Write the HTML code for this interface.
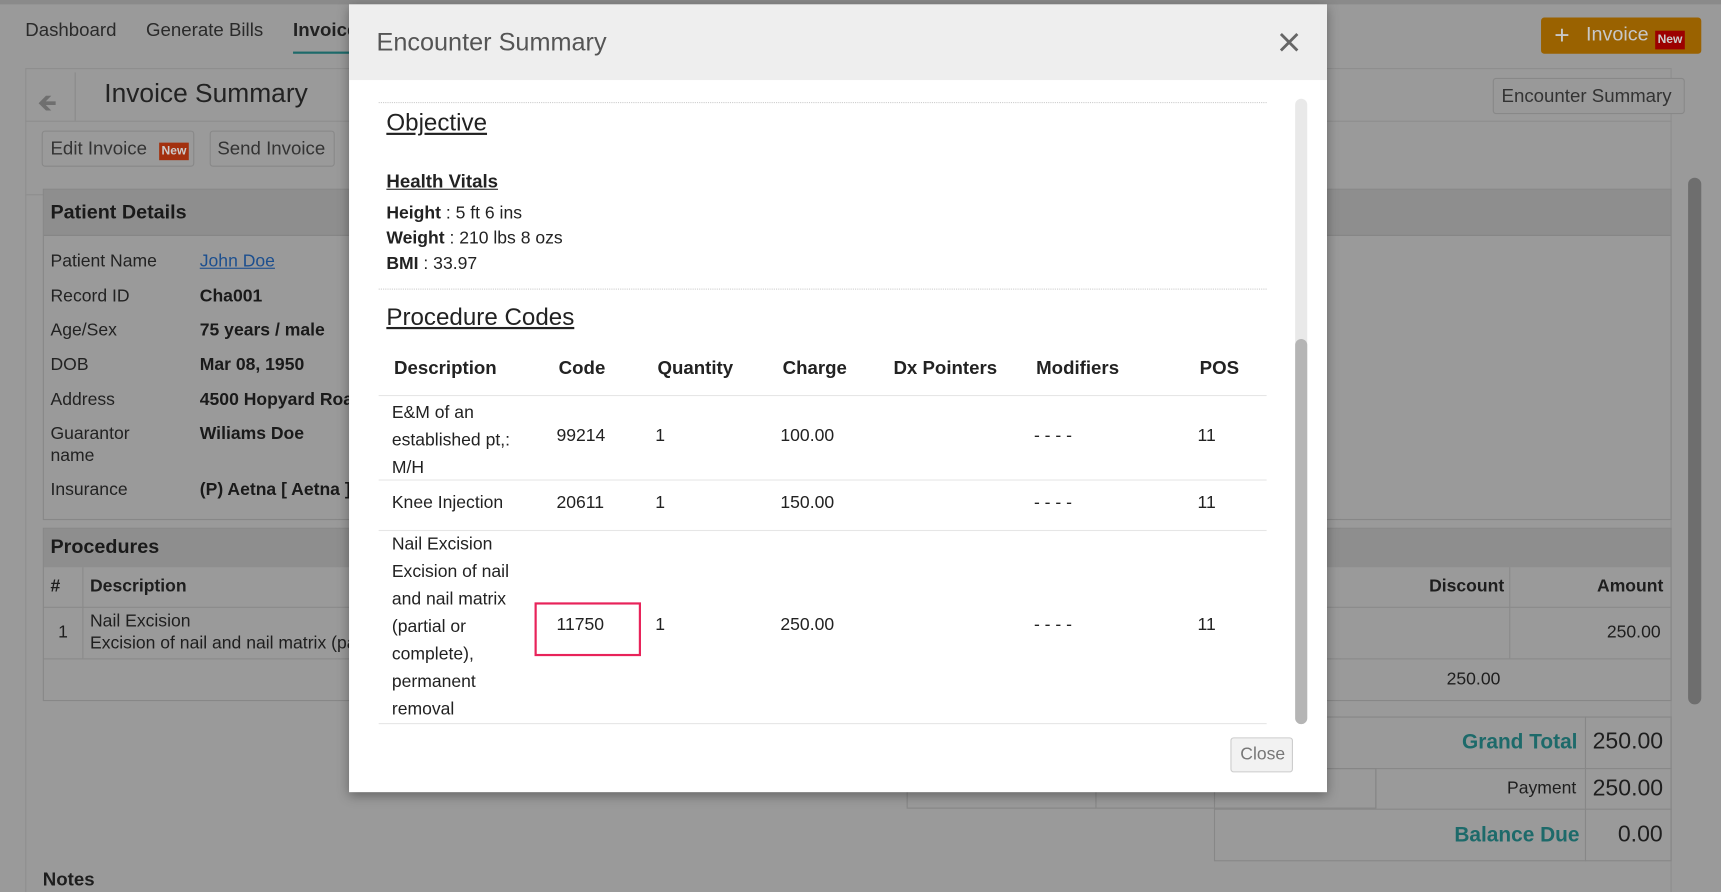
<!DOCTYPE html>
<html><head><meta charset="utf-8"><style>
*{box-sizing:border-box;margin:0;padding:0}
html,body{width:1721px;height:892px;overflow:hidden;background:#999}
#w{position:absolute;left:0;top:0;width:1568px;height:813px;transform:scale(1.0976,1.0972);transform-origin:0 0;background:#9a9a9a;font-family:"Liberation Sans",sans-serif;color:#1e1e1e;overflow:hidden}
.a{position:absolute;white-space:nowrap}
.b{position:absolute;border:1px solid #878787}
.lbl{font-size:16px;color:#222}
.val{font-size:16px;font-weight:bold;color:#1a1a1a}
#m{position:absolute;left:318px;top:4px;width:891px;height:718px;background:#fff;box-shadow:0 3px 10px rgba(0,0,0,.35)}
#m .a{color:#222}
.th{font-size:17px;font-weight:bold}
.td{font-size:16px}
.dl{position:absolute;left:27px;width:809px;border-top:1px dotted #ccc}
.sl{position:absolute;left:27px;width:809px;border-top:1px solid #e6e6e6}
</style></head><body><div id="w">
<div class="a" style="left:0;top:0;width:1568px;height:4px;background:#8a8a8a"></div>
<div class="a" style="left:23px;top:18px;font-size:17px;color:#2a2a2a">Dashboard</div>
<div class="a" style="left:133px;top:18px;font-size:17px;color:#2a2a2a">Generate Bills</div>
<div class="a" style="left:267px;top:18px;font-size:17px;font-weight:bold;color:#222">Invoices</div>
<div class="a" style="left:267px;top:47px;width:60px;height:2px;background:#1d6a6a"></div>
<div class="a" style="left:1404px;top:16px;width:146px;height:33px;background:#9a6200;border-radius:3px"></div>
<div class="a" style="left:1416px;top:19px;font-size:24px;color:#c8c8c8">+</div>
<div class="a" style="left:1445px;top:21px;font-size:18px;color:#c8c8c8">Invoice</div>
<div class="a" style="left:1508px;top:28px;width:27px;height:17px;background:#9c0000;color:#ccc;font-size:11px;font-weight:bold;text-align:center;line-height:17px">New</div>
<div class="b" style="left:23px;top:62px;width:1500px;height:760px;border-color:#8e8e8e"></div>
<div class="a" style="left:23px;top:110px;width:1500px;height:1px;background:#8e8e8e"></div>
<div class="a" style="left:68px;top:66px;width:1px;height:44px;background:#8a8a8a"></div>
<div class="a" style="left:34px;top:77px;font-size:22px;color:#6f6f6f">&#129144;</div>
<div class="a" style="left:95px;top:72px;font-size:24px;color:#222">Invoice Summary</div>
<div class="a" style="left:1360px;top:71px;width:175px;height:33px;border:1px solid #888;border-radius:3px;background:#999"></div>
<div class="a" style="left:1368px;top:78px;font-size:17px;color:#333">Encounter Summary</div>
<div class="a" style="left:38px;top:119px;width:139px;height:33px;border:1px solid #888;border-radius:3px"></div>
<div class="a" style="left:46px;top:126px;font-size:17px;color:#333">Edit Invoice</div>
<div class="a" style="left:145px;top:130px;width:27px;height:16px;background:#a3300e;color:#ccc;font-size:11px;font-weight:bold;text-align:center;line-height:16px">New</div>
<div class="a" style="left:191px;top:119px;width:114px;height:33px;border:1px solid #888;border-radius:3px"></div>
<div class="a" style="left:198px;top:126px;font-size:17px;color:#333">Send Invoice</div>
<div class="a" style="left:23px;top:177px;width:1500px;height:1px;background:#8e8e8e"></div>
<div class="b" style="left:39px;top:172px;width:1484px;height:302px"></div>
<div class="a" style="left:40px;top:173px;width:1482px;height:42px;background:#8e8e8e;border-bottom:1px solid #858585"></div>
<div class="a" style="left:46px;top:183px;font-size:18px;font-weight:bold;color:#1a1a1a">Patient Details</div>
<div class="a lbl" style="left:46px;top:230px">Patient Name</div><div class="a" style="left:182px;top:230px;font-size:16px;color:#1c4f8f;text-decoration:underline">John Doe</div>
<div class="a lbl" style="left:46px;top:262px">Record ID</div><div class="a val" style="left:182px;top:262px">Cha001</div>
<div class="a lbl" style="left:46px;top:293px">Age/Sex</div><div class="a val" style="left:182px;top:293px">75 years / male</div>
<div class="a lbl" style="left:46px;top:324px">DOB</div><div class="a val" style="left:182px;top:324px">Mar 08, 1950</div>
<div class="a lbl" style="left:46px;top:356px">Address</div><div class="a val" style="left:182px;top:356px">4500 Hopyard Road</div>
<div class="a lbl" style="left:46px;top:387px">Guarantor</div><div class="a lbl" style="left:46px;top:407px">name</div><div class="a val" style="left:182px;top:387px">Wiliams Doe</div>
<div class="a lbl" style="left:46px;top:438px">Insurance</div><div class="a val" style="left:182px;top:438px">(P) Aetna [ Aetna ]</div>
<div class="b" style="left:39px;top:481px;width:1484px;height:158px"></div>
<div class="a" style="left:40px;top:482px;width:1482px;height:35px;background:#8e8e8e"></div>
<div class="a" style="left:46px;top:488px;font-size:18px;font-weight:bold;color:#1a1a1a">Procedures</div>
<div class="a" style="left:40px;top:553px;width:1482px;height:1px;background:#8a8a8a"></div>
<div class="a" style="left:40px;top:600px;width:1482px;height:1px;background:#8a8a8a"></div>
<div class="a" style="left:75px;top:517px;width:1px;height:83px;background:#8a8a8a"></div>
<div class="a" style="left:1375px;top:517px;width:1px;height:83px;background:#8a8a8a"></div>
<div class="a" style="left:46px;top:526px;font-size:16px;font-weight:bold">#</div>
<div class="a" style="left:82px;top:526px;font-size:16px;font-weight:bold">Description</div>
<div class="a" style="left:1302px;top:526px;font-size:16px;font-weight:bold">Discount</div>
<div class="a" style="left:1455px;top:526px;font-size:16px;font-weight:bold">Amount</div>
<div class="a" style="left:53px;top:568px;font-size:16px">1</div>
<div class="a" style="left:82px;top:558px;font-size:16px">Nail Excision</div>
<div class="a" style="left:82px;top:578px;font-size:16px">Excision of nail and nail matrix (partial or complete)</div>
<div class="a" style="left:1464px;top:568px;font-size:16px">250.00</div>
<div class="a" style="left:1318px;top:611px;font-size:16px">250.00</div>
<div class="b" style="left:1106px;top:653px;width:417px;height:132px"></div>
<div class="a" style="left:1106px;top:700px;width:417px;height:1px;background:#878787"></div>
<div class="a" style="left:1106px;top:737px;width:417px;height:1px;background:#878787"></div>
<div class="a" style="left:1444px;top:653px;width:1px;height:132px;background:#878787"></div>
<div class="a" style="left:1253px;top:700px;width:1px;height:37px;background:#878787"></div>
<div class="b" style="left:826px;top:700px;width:428px;height:37px"></div>
<div class="a" style="left:998px;top:700px;width:1px;height:37px;background:#878787"></div>
<div class="a" style="left:1332px;top:666px;font-size:19px;font-weight:bold;color:#1d6a6a">Grand Total</div>
<div class="a" style="left:1451px;top:664px;font-size:21px">250.00</div>
<div class="a" style="left:1373px;top:710px;font-size:16px">Payment</div>
<div class="a" style="left:1451px;top:707px;font-size:21px">250.00</div>
<div class="a" style="left:1325px;top:751px;font-size:19px;font-weight:bold;color:#1d6a6a">Balance Due</div>
<div class="a" style="left:1474px;top:749px;font-size:21px">0.00</div>
<div class="a" style="left:39px;top:792px;font-size:17px;font-weight:bold">Notes</div>
<div class="a" style="left:1538px;top:162px;width:12px;height:480px;background:#6e6e6e;border-radius:6px"></div>

<div id="m">
<div class="a" style="left:0;top:0;width:891px;height:69px;background:#eee"></div>
<div class="a" style="left:25px;top:21px;font-size:23px;color:#555 !important">Encounter Summary</div>
<svg class="a" style="left:847px;top:25px" width="19" height="19" viewBox="0 0 19 19"><path d="M2 2L17 17M17 2L2 17" stroke="#666" stroke-width="2.6"/></svg>
<div class="dl" style="top:89px"></div>
<div class="a" style="left:34px;top:95px;font-size:22px;text-decoration:underline">Objective</div>
<div class="a" style="left:34px;top:152px;font-size:17px;font-weight:bold;text-decoration:underline">Health Vitals</div>
<div class="a td" style="left:34px;top:182px"><b>Height</b> : 5 ft 6 ins</div>
<div class="a td" style="left:34px;top:205px"><b>Weight</b> : 210 lbs 8 ozs</div>
<div class="a td" style="left:34px;top:228px"><b>BMI</b> : 33.97</div>
<div class="dl" style="top:259px"></div>
<div class="a" style="left:34px;top:272px;font-size:22px;text-decoration:underline">Procedure Codes</div>
<div class="a th" style="left:41px;top:322px">Description</div>
<div class="a th" style="left:191px;top:322px">Code</div>
<div class="a th" style="left:281px;top:322px">Quantity</div>
<div class="a th" style="left:395px;top:322px">Charge</div>
<div class="a th" style="left:496px;top:322px">Dx Pointers</div>
<div class="a th" style="left:626px;top:322px">Modifiers</div>
<div class="a th" style="left:775px;top:322px">POS</div>
<div class="sl" style="top:356px"></div>
<div class="a td" style="left:39px;top:360px;line-height:25px;white-space:normal;width:130px">E&amp;M of an established pt,: M/H</div>
<div class="a td" style="left:189px;top:385px">99214</div><div class="a td" style="left:279px;top:385px">1</div><div class="a td" style="left:393px;top:385px">100.00</div><div class="a td" style="left:624px;top:385px">- - - -</div><div class="a td" style="left:773px;top:385px">11</div>
<div class="sl" style="top:433px"></div>
<div class="a td" style="left:39px;top:446px">Knee Injection</div>
<div class="a td" style="left:189px;top:446px">20611</div><div class="a td" style="left:279px;top:446px">1</div><div class="a td" style="left:393px;top:446px">150.00</div><div class="a td" style="left:624px;top:446px">- - - -</div><div class="a td" style="left:773px;top:446px">11</div>
<div class="sl" style="top:479px"></div>
<div class="a td" style="left:39px;top:480px;line-height:25px;white-space:normal;width:125px">Nail Excision Excision of nail and nail matrix (partial or complete), permanent removal</div>
<div class="a" style="left:169px;top:545px;width:97px;height:49px;border:2px solid #e8235a"></div>
<div class="a td" style="left:189px;top:557px">11750</div><div class="a td" style="left:279px;top:557px">1</div><div class="a td" style="left:393px;top:557px">250.00</div><div class="a td" style="left:624px;top:557px">- - - -</div><div class="a td" style="left:773px;top:557px">11</div>
<div class="sl" style="top:655px"></div>
<div class="a" style="left:862px;top:86px;width:11px;height:570px;background:#e9e9e9;border-radius:6px"></div>
<div class="a" style="left:862px;top:305px;width:11px;height:351px;background:#b5b5b5;border-radius:6px"></div>
<div class="a" style="left:803px;top:668px;width:57px;height:32px;background:#f2f2f2;border:1px solid #ccc;border-radius:3px"></div>
<div class="a" style="left:812px;top:675px;font-size:16px;color:#777 !important">Close</div>
</div>
</div></body></html>
